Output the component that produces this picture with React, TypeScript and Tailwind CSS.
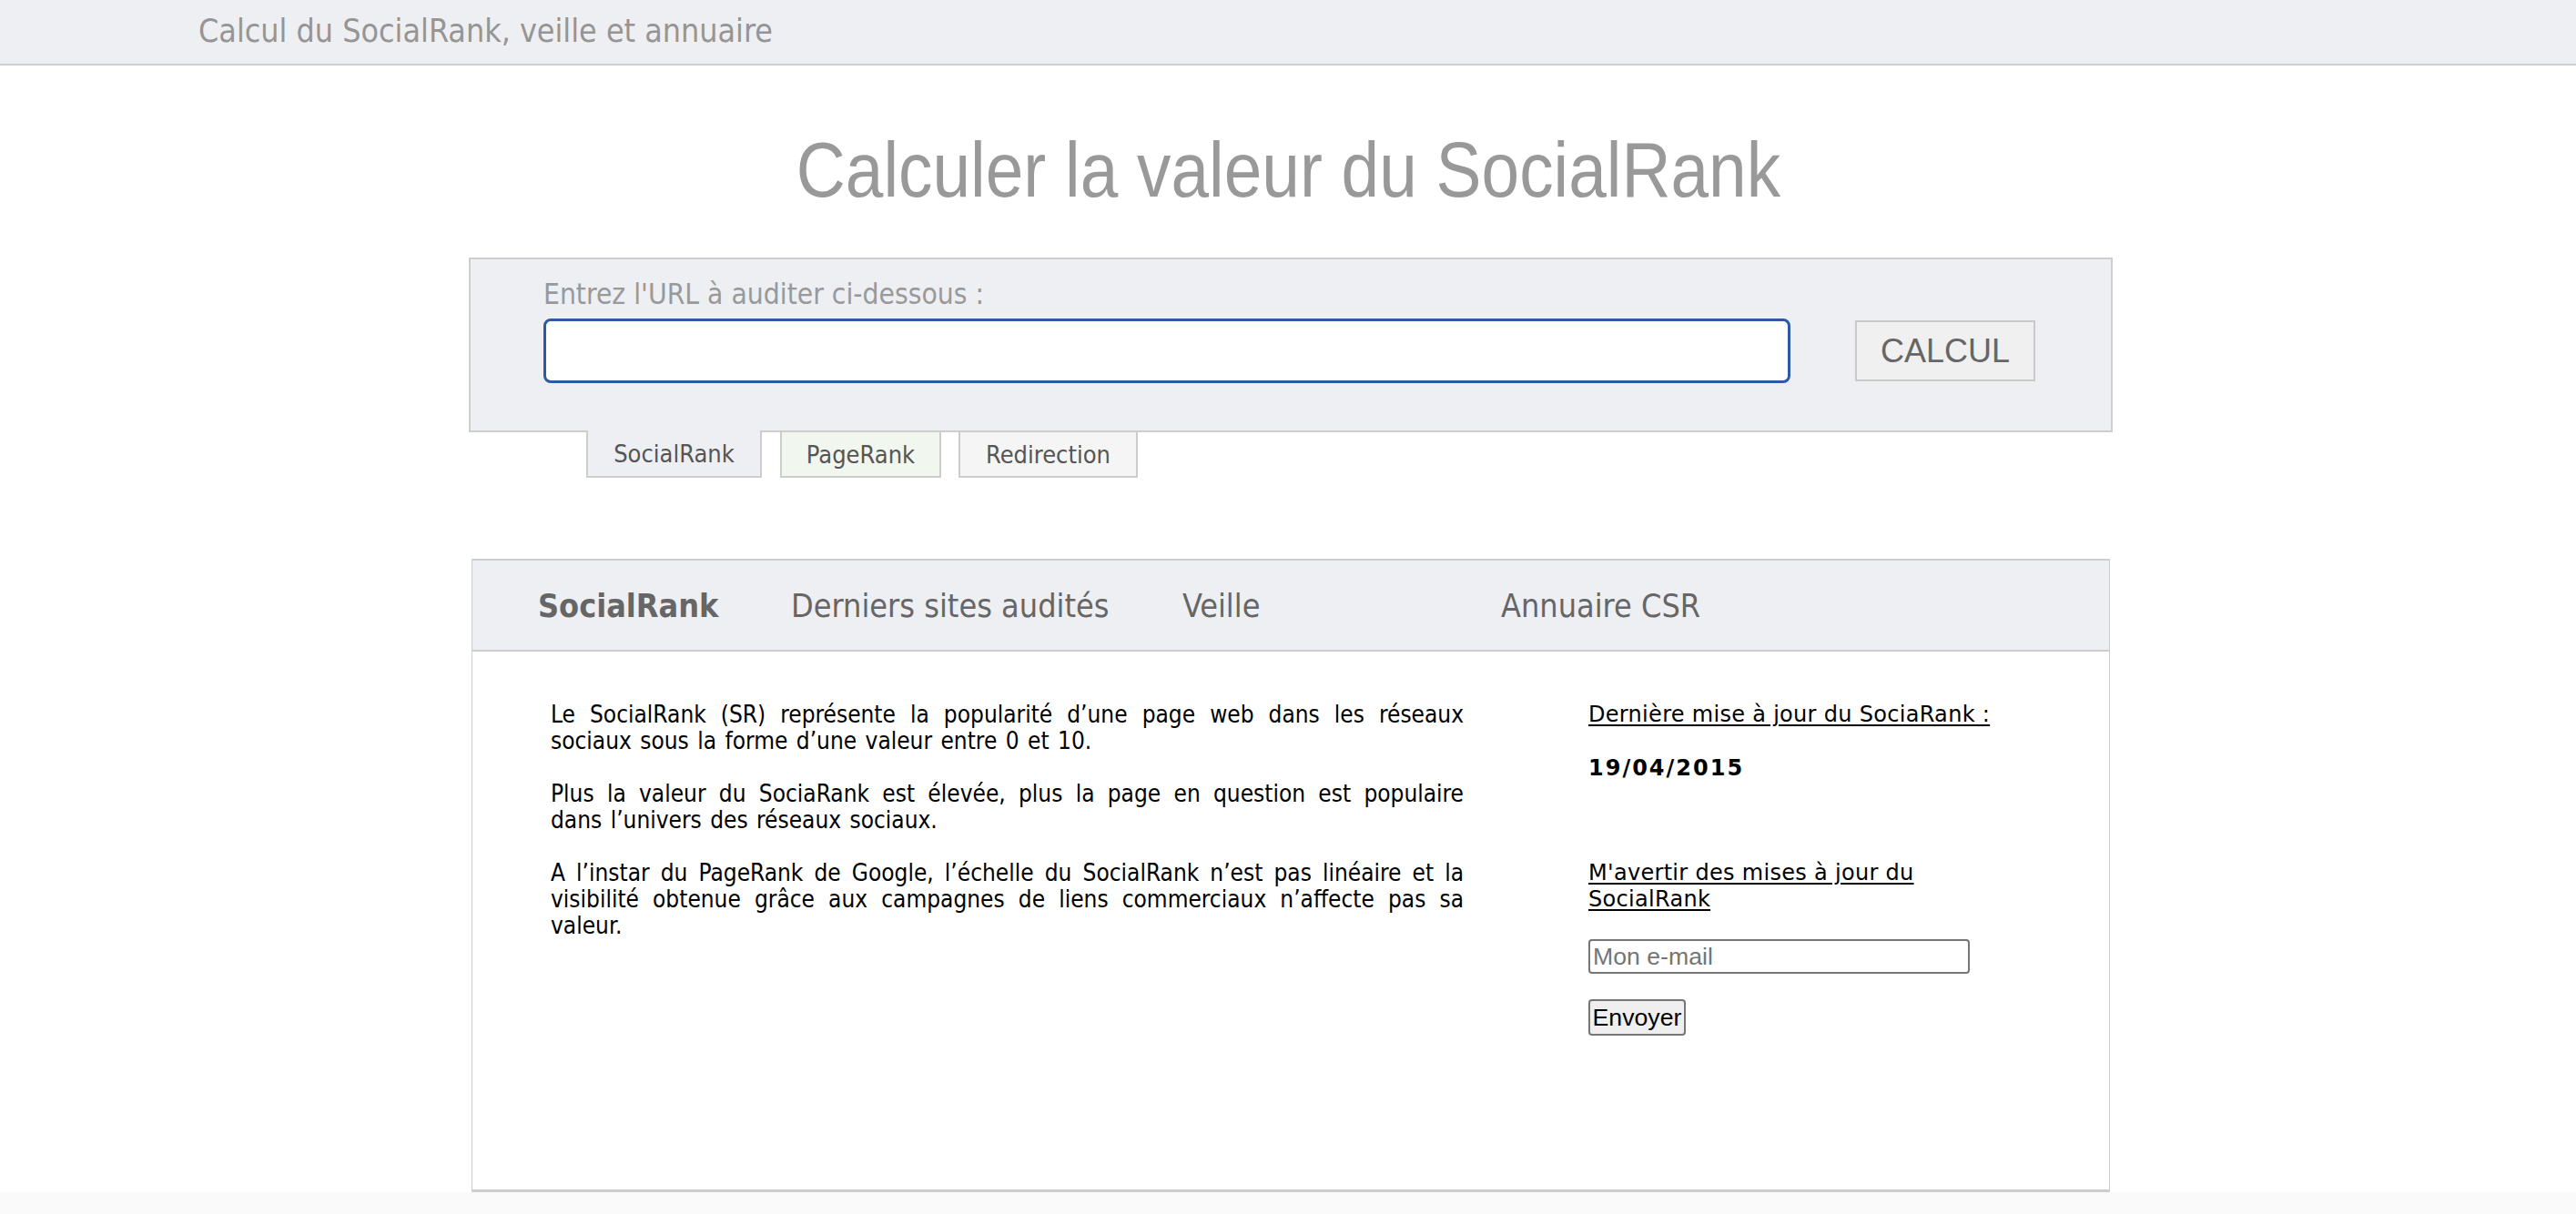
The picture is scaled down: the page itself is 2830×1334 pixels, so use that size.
export default function App() {
  const tahoma = "font-['DejaVu_Sans_Condensed','DejaVu_Sans',sans-serif]";
  return (
    <div className="min-h-[1334px] bg-white flex flex-col">
      <header className="h-[72px] shrink-0 bg-[#eeeff3] border-b-2 border-[#cfcfcf] flex items-center pl-[218px]">
        <span className={`${tahoma} text-[35.5px] text-[#959595] leading-none -mt-[2px]`}>
          Calcul du SocialRank, veille et annuaire
        </span>
      </header>

      <h1 className="mt-[64px] h-[100px] leading-[100px] text-center text-[86px] text-[#999999] font-['Liberation_Sans',sans-serif]">
        <span className="inline-block scale-x-[0.87]">Calculer la valeur du SocialRank</span>
      </h1>

      <div className="ml-[515px] mt-[47px] w-[1806px]">
        <div className="bg-[#eeeff3] border-2 border-[#cdcdcd] pt-[21px] pl-[80px] h-[192px]">
          <div className={`${tahoma} h-[35px] leading-[35px] text-[31.5px] text-[#999999]`}>
            Entrez l'URL à auditer ci-dessous :
          </div>
          <div className="mt-[9px] flex items-center">
            <input
              type="text"
              className="w-[1370px] h-[71px] bg-white border-[3px] border-[#2d5aa6] rounded-[8px] outline-none px-3"
            />
            <button className="ml-[71px] w-[198px] h-[67px] bg-[#f0f0f0] border-2 border-[#c9c9c9] text-[#666666] text-[36px] font-['Liberation_Sans',sans-serif]">
              CALCUL
            </button>
          </div>
        </div>
        <div className={`${tahoma} flex pl-[129px] text-[27px] text-[#555555]`}>
          <div className="-mt-[2px] w-[193px] h-[52px] bg-[#eeeff3] border-2 border-t-0 border-[#cdcdcd] flex items-center justify-center pt-[2px]">
            SocialRank
          </div>
          <div className="ml-[20px] w-[177px] h-[50px] bg-[#f1f6ef] border-2 border-t-0 border-[#cdcdcd] flex items-center justify-center pt-[2px]">
            PageRank
          </div>
          <div className="ml-[19px] w-[197px] h-[50px] bg-[#f5f5f5] border-2 border-t-0 border-[#cdcdcd] flex items-center justify-center pt-[2px]">
            Redirection
          </div>
        </div>
      </div>

      <div className="ml-[518px] mt-[89px] w-[1800px] h-[696px] border-x border-t-2 border-b-[3px] border-[#cdcdcd] flex flex-col">
        <nav className={`${tahoma} h-[100px] shrink-0 bg-[#eeeff3] border-b-2 border-[#cdcdcd] flex items-center pl-[72px] pt-[2px] text-[35.7px] text-[#666666]`}>
          <div className="w-[278px] font-bold">SocialRank</div>
          <div className="w-[430px]">Derniers sites audités</div>
          <div className="w-[350px]">Veille</div>
          <div>Annuaire CSR</div>
        </nav>
        <div className="flex pt-[55px] pl-[86px]">
          <div className={`${tahoma} w-[1003px] text-[26px] leading-[29px] text-black text-justify [word-spacing:2px]`}>
            <p>Le SocialRank (SR) représente la popularité d’une page web dans les réseaux sociaux sous la forme d’une valeur entre 0 et 10.</p>
            <p className="mt-[29px]">Plus la valeur du SociaRank est élevée, plus la page en question est populaire dans l’univers des réseaux sociaux.</p>
            <p className="mt-[29px]">A l’instar du PageRank de Google, l’échelle du SocialRank n’est pas linéaire et la visibilité obtenue grâce aux campagnes de liens commerciaux n’affecte pas sa valeur.</p>
          </div>
          <div className="ml-[137px] w-[460px] font-['DejaVu_Sans',sans-serif] text-[24px] tracking-[0.3px] leading-[29px] text-black">
            <p className="underline underline-offset-[3px]">Dernière mise à jour du SociaRank :</p>
            <p className="mt-[30px] font-bold tracking-[2px]">19/04/2015</p>
            <p className="mt-[86px] underline underline-offset-[3px]">M'avertir des mises à jour du SocialRank</p>
            <input
              type="text"
              placeholder="Mon e-mail"
              className="mt-[29px] block w-[419px] h-[38px] border-2 border-[#767676] rounded-[4px] px-[3px] text-[26.67px] tracking-normal font-['Liberation_Sans',sans-serif] placeholder:text-[#757575] outline-none"
            />
            <button className="mt-[28px] block w-[107px] h-[40px] bg-[#efefef] border-2 border-[#767676] rounded-[4px] text-[26.67px] tracking-normal leading-none font-['Liberation_Sans',sans-serif] text-black">
              Envoyer
            </button>
          </div>
        </div>
      </div>

      <div className="flex-1 min-h-[22px] bg-[#fafafa]" />
    </div>
  );
}
